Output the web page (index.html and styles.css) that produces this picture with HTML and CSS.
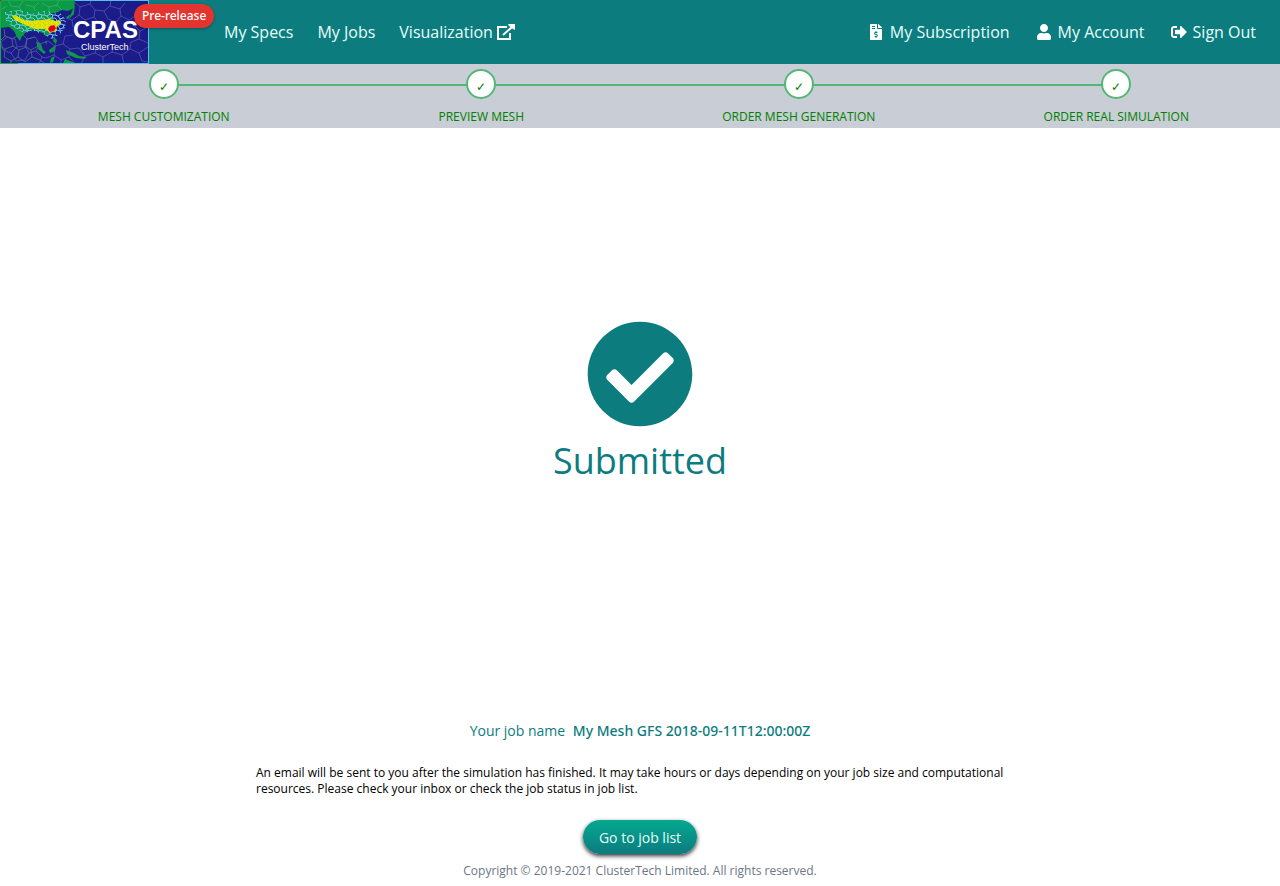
FILE: index.html
```html
<!DOCTYPE html>
<html lang="en">
<head>
    <meta charset="UTF-8">
    <meta name="viewport" content="width=device-width, initial-scale=1.0">
    <title>CPAS - Submitted</title>
    <link rel="stylesheet" href="styles.css">
</head>
<body>

    <header class="navbar">
        <a href="#" class="brand" aria-label="CPAS ClusterTech">
            <svg class="logo" viewBox="0 0 149 64" width="149" height="64">
                <defs>
                    <pattern id="cells" width="11" height="10" patternUnits="userSpaceOnUse">
                        <path d="M0 2L2 0L5 1L6 4L3 6L0 5ZM5 1L8 0L11 2M6 4L9 5L11 5M9 5L8 8L5 9L3 6M5 9L5 10M8 8L11 8M0 8L2 10M2 0V-1" fill="none" stroke="#74c8f0" stroke-width="1"/>
                    </pattern>
                    <pattern id="fineCells" width="5" height="4" patternUnits="userSpaceOnUse">
                        <rect width="5" height="4" fill="#e4e400"/>
                        <path d="M0 1h1M3 3h1M4 0h1" stroke="#b4c020" stroke-width="1"/>
                    </pattern>
                </defs>
                <rect width="149" height="64" fill="#1b1b8a"/>
                <!-- land -->
                <path d="M0 0H75L74 8L68 11L62 10L58 12L50 14L54 20L52 30L47 36L43 33L32 30L25 33L22 36L20 41L17 37L14 31L9 27L0 28Z" fill="#0b9a46"/>
                <path d="M75 4l-1 10-5 5 3-8zM66 17l5-3-3 5zM36 41l5 3 2 6 3 2-2 2-6-5zM49 50l4-3 3-3-1 7-5 2zM54 37l3 3-1 4-3-3zM51 58l4-2-2 6-3 1zM66 50l8 3 5 3 8 1-3 2-8-1-9-4zM65 59l10 4H63zM45 41l2 1-1 3z" fill="#0b9a46"/>
                <!-- coarse cells -->
                <path d="M8 0l3 6 8 1 4-6M19 7l3 5M0 10l7-4M26 5l8 2 5-5M34 7l1 4M42 3l7 4 8-2 2-5M49 7v5M57 5l5 5M4 29l1 7 7 3 5-3M12 39l1 7 6 4 7-3 1-8-5-5M0 41l5-5M13 46l-8 3-5-3M5 49l-1 8 7 4 7-4 1-7M11 61v3M18 57l7 5 7-5-1-7-5-3M27 39l8-2M31 50l7-4M32 57l8 3 5 4" fill="none" stroke="#6fbe79" stroke-opacity=".45"/>
                <path d="M1 42l6-5 8 2 2 8-6 6-8-3zM17 47l8-1 4 7-4 7-9 1-5-8M25 46l2-7 8-2 5 7-4 7-7 2M36 51l6 6-3 7M40 44l8-3 7 5-1 9-8 3-4-1M54 55l7 5 8-3 1-8-7-5-8 2M61 60v4M63 44l2-8 8-1M70 49l9-1 6 8-4 8M69 57l6 7M85 56l10-3 8 4v7M95 53l2-6M73 1l7 6 10-3 1-4M80 7l-1 8 6 5 9-3 1-7-5-6M95 10l9 1 6-5 1-6M94 17l3 4M104 11l4 8M110 6l10 3 5-6M120 9l1 7 8 4 6-4M79 15l-7 5-6-2M72 20l1 7M108 19l8 3 5-6M116 22v4M103 57l9-5 10 3 2 9M112 52l1-5M122 55l8-6 9 4 3 8 6 1M130 49l1-7 8-3 9 4M139 53l9-6M139 39l1-8 8-4M140 31l-5-5" fill="none" stroke="#5555b0" stroke-width=".8"/>
                <!-- refined region -->
                <path d="M5 12L19 10L32 13L45 11L60 13L66 20L65 28L60 34L52 39L43 34L33 31L24 33L13 27L6 22Z" fill="url(#cells)"/>
                <path d="M12 16L16 15L21 19L30 21L41 20L49 19L56 21L60 21L61 24L57 26L56 31L50 33L45 29L35 29L25 25L15 20Z" fill="url(#fineCells)"/>
                <path d="M50 26l4-1 2 3-2 3-4 1-2-3z" fill="#e3001b"/>
                <path d="M0 .5H149M148.500 0V64M0 63.500H149" stroke="#55bfe8" fill="none"/>
                <path d="M.5 0V64M0 .5H75M0 63.500H18" stroke="#17a94b" fill="none"/>
                <path d="M0 0h1v1H0z" fill="#f00"/>
                <text x="73" y="38" class="logo-name">CPAS</text>
                <text x="81" y="50" class="logo-company">ClusterTech</text>
            </svg>
            <span class="badge">Pre-release</span>
        </a>
        <nav class="nav-links">
            <a href="#">My Specs</a>
            <a href="#">My Jobs</a>
            <a href="#">Visualization
                <svg class="icon-external" viewBox="0 0 18 16" width="18" height="16">
                    <path d="M10 3H1V15H13V9" fill="none" stroke="currentColor" stroke-width="2"/>
                    <path d="M6 11L15 3" fill="none" stroke="currentColor" stroke-width="2"/>
                    <path d="M11 0H18V6L16 5L12 2Z" fill="currentColor"/>
                </svg>
            </a>
        </nav>
        <nav class="nav-links nav-user">
            <a href="#">
                <svg class="icon" viewBox="0 0 384 512"><path d="M377 105L279.100 7c-4.500-4.500-10.600-7-17-7H256v128h128v-6.100c0-6.300-2.500-12.400-7-16.900zm-153 31V0H24C10.700 0 0 10.700 0 24v464c0 13.300 10.700 24 24 24h336c13.300 0 24-10.700 24-24V160H248c-13.200 0-24-10.800-24-24zM64 72c0-4.420 3.580-8 8-8h80c4.420 0 8 3.580 8 8v16c0 4.420-3.580 8-8 8H72c-4.420 0-8-3.580-8-8V72zm0 80v-16c0-4.420 3.580-8 8-8h80c4.420 0 8 3.580 8 8v16c0 4.420-3.580 8-8 8H72c-4.420 0-8-3.580-8-8zm144 263.880V440c0 4.420-3.580 8-8 8h-16c-4.420 0-8-3.580-8-8v-24.290c-11.290-.58-22.270-4.520-31.370-11.350-3.900-2.930-4.100-8.770-.57-12.140l11.750-11.210c2.770-2.640 6.890-2.760 10.130-.73 3.870 2.420 8.260 3.720 12.820 3.720h28.110c6.500 0 11.800-5.920 11.800-13.190 0-5.950-3.610-11.190-8.770-12.730l-45-13.500c-18.590-5.580-31.580-23.420-31.580-43.390 0-24.520 19.050-44.440 42.670-45.070V232c0-4.420 3.580-8 8-8h16c4.420 0 8 3.580 8 8v24.290c11.290.58 22.270 4.510 31.370 11.350 3.900 2.930 4.100 8.770.57 12.140l-11.750 11.210c-2.770 2.640-6.890 2.760-10.130.73-3.870-2.430-8.260-3.720-12.820-3.720h-28.110c-6.500 0-11.800 5.920-11.800 13.190 0 5.950 3.610 11.190 8.770 12.730l45 13.500c18.590 5.580 31.580 23.420 31.580 43.390 0 24.530-19.050 44.440-42.670 45.070z"/></svg>
                My Subscription
            </a>
            <a href="#">
                <svg class="icon" viewBox="0 0 448 512"><path d="M224 256c70.700 0 128-57.300 128-128S294.700 0 224 0 96 57.300 96 128s57.300 128 128 128zm89.600 32h-16.700c-22.200 10.200-46.900 16-72.900 16s-50.600-5.800-72.900-16h-16.700C60.200 288 0 348.200 0 422.400V464c0 26.500 21.500 48 48 48h352c26.500 0 48-21.500 48-48v-41.600c0-74.200-60.200-134.400-134.400-134.400z"/></svg>
                My Account
            </a>
            <a href="#">
                <svg class="icon" viewBox="0 0 512 512"><path d="M497 273L329 441c-15 15-41 4.500-41-17v-96H152c-13.300 0-24-10.700-24-24v-96c0-13.300 10.700-24 24-24h136V88c0-21.400 25.900-32 41-17l168 168c9.300 9.400 9.300 24.600 0 34zM192 436v-40c0-6.600-5.400-12-12-12H96c-17.700 0-32-14.300-32-32V160c0-17.700 14.300-32 32-32h84c6.600 0 12-5.400 12-12V76c0-6.600-5.400-12-12-12H96c-53 0-96 43-96 96v192c0 53 43 96 96 96h84c6.600 0 12-5.400 12-12z"/></svg>
                Sign Out
            </a>
        </nav>
    </header>

    <ol class="steps">
        <li class="step"><span class="step-mark">✓</span>Mesh Customization</li>
        <li class="step"><span class="step-mark">✓</span>Preview Mesh</li>
        <li class="step"><span class="step-mark">✓</span>Order Mesh Generation</li>
        <li class="step"><span class="step-mark">✓</span>Order Real Simulation</li>
    </ol>

    <main class="content">
        <div class="result">
            <svg class="result-icon" viewBox="0 0 512 512"><path d="M504 256c0 136.967-111.033 248-248 248S8 392.967 8 256 119.033 8 256 8s248 111.033 248 248zM227.314 387.314l184-184c6.248-6.248 6.248-16.379 0-22.627l-22.627-22.627c-6.248-6.249-16.379-6.249-22.628 0L216 308.118l-70.059-70.059c-6.248-6.248-16.379-6.248-22.628 0l-22.627 22.627c-6.248 6.248-6.248 16.379 0 22.627l104 104c6.249 6.249 16.379 6.249 22.628.001z"/></svg>
            <h1>Submitted</h1>
        </div>
        <p class="job">Your job name <strong>My Mesh GFS 2018-09-11T12:00:00Z</strong></p>
        <p class="note">An email will be sent to you after the simulation has finished. It may take hours or days depending on your job size and computational resources. Please check your inbox or check the job status in job list.</p>
        <button type="button" class="job-button">Go to job list</button>
    </main>

    <footer class="footer">Copyright © 2019-2021 ClusterTech Limited. All rights reserved.</footer>

</body>
</html>
```
FILE: styles.css
```css
* {
    margin: 0;
    padding: 0;
    box-sizing: border-box;
}

body {
    font-family: 'Open Sans', 'Noto Sans', sans-serif;
    font-size: 16px;
    color: #000;
    background-color: #fff;
    display: flex;
    flex-direction: column;
    min-height: 100vh;
}

/* Navbar */
.navbar {
    display: flex;
    align-items: center;
    height: 64px;
    padding-right: 12px;
    background-color: #0c7c7f;
}

.brand {
    position: relative;
    width: 212px;
    height: 64px;
    text-decoration: none;
}

.logo {
    display: block;
}

.logo-name {
    font: bold 24px 'Liberation Sans', sans-serif;
    fill: #fff;
}

.logo-company {
    font: 9px 'Liberation Sans', sans-serif;
    fill: #fff;
}

.badge {
    position: absolute;
    top: 4px;
    left: 134px;
    padding: 0 8px;
    border-radius: 12px;
    background-color: #e3342f;
    box-shadow: 0 1px 3px rgba(0, 0, 0, 0.3);
    color: #fff;
    font-family: 'Noto Sans', sans-serif;
    font-size: 12px;
    font-weight: 500;
    line-height: 24px;
    white-space: nowrap;
}

.nav-links {
    display: flex;
}

.nav-links a {
    display: flex;
    align-items: center;
    gap: 4px;
    padding: 0 12px;
    color: #e6fffa;
    line-height: 24px;
    text-decoration: none;
    white-space: nowrap;
}

.nav-user {
    margin-left: auto;
}

.icon {
    width: 20px;
    height: 16px;
    fill: #fff;
}

.icon-external {
    color: #fff;
}

/* Steps */
.steps {
    display: flex;
    height: 64px;
    padding: 5px;
    background-color: #c9cdd5;
    list-style: none;
}

.step {
    position: relative;
    flex: 1;
    display: flex;
    flex-direction: column;
    align-items: center;
    gap: 10px;
    color: #008000;
    font-size: 12px;
    line-height: 16px;
    text-transform: uppercase;
}

.step-mark {
    position: relative;
    z-index: 1;
    width: 30px;
    height: 30px;
    border: 2px solid #55b776;
    border-radius: 50%;
    background-color: #fff;
    line-height: 32px;
    text-align: center;
}

/* line back to the previous step */
.step + .step::before {
    content: "";
    position: absolute;
    top: 15px;
    right: 50%;
    width: 100%;
    height: 2px;
    background-color: #55b776;
}

/* Content */
.content {
    flex: 1;
    display: flex;
    flex-direction: column;
    align-items: center;
}

.result {
    flex: 1;
    display: flex;
    flex-direction: column;
    align-items: center;
    justify-content: center;
    gap: 8px;
    margin-bottom: 42px;
    color: #0c7c7f;
}

.result-icon {
    width: 108px;
    height: 108px;
    fill: currentColor;
}

h1 {
    font-size: 36px;
    font-weight: 400;
    line-height: 50px;
}

.job {
    margin-bottom: 23px;
    color: #0c7c7f;
    font-size: 14px;
    line-height: 22px;
}

.job strong {
    margin-left: 4px;
    font-family: 'Noto Sans', sans-serif;
    font-weight: 500;
}

.note {
    width: 60%;
    margin-bottom: 23px;
    font-size: 12px;
    line-height: 16px;
}

.job-button {
    height: 34px;
    padding: 0 16px;
    border: none;
    border-radius: 17px;
    background: linear-gradient(#04a890, #0c7c7f);
    box-shadow: 0 2px 4px rgba(0, 0, 0, 0.8);
    color: #e6fffa;
    font-family: inherit;
    font-size: 14px;
    cursor: pointer;
}

/* Footer */
.footer {
    padding: 8px 0 6px;
    color: #6b7684;
    font-size: 12px;
    line-height: 18px;
    text-align: center;
}
```
